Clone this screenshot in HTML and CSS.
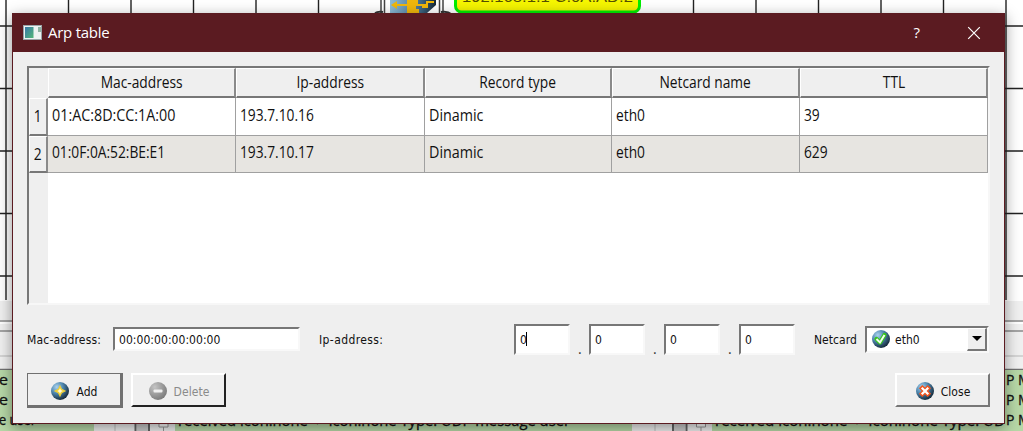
FILE: index.html
```html
<!DOCTYPE html>
<html lang="en">
<head>
<meta charset="utf-8">
<title>Arp table</title>
<link rel="stylesheet" href="styles.css">
</head>
<body>
<svg class="backdrop" width="1023" height="431" viewBox="0 0 1023 431">
  <defs>
    <linearGradient id="lbl" x1="0" y1="0" x2="0" y2="1"><stop offset="0" stop-color="#ffff00"/><stop offset="1" stop-color="#f0f000"/></linearGradient>
    <linearGradient id="router"><stop offset="0" stop-color="#8fbdd9"/><stop offset=".6" stop-color="#4a7798"/><stop offset="1" stop-color="#152735"/></linearGradient>
  </defs>
  <rect width="1023" height="301" fill="#fff"/>
  <path class="grid-line" d="M6 0V300M68.5 0V300M131 0V300M193.5 0V300M256 0V300M318.5 0V300M693.5 0V300M756 0V300M818.5 0V300M881 0V300M943.5 0V300M1006 0V300M0 26H1023M0 88.5H1023M0 151H1023M0 213.500H1023M0 276H1023"/>
  <path d="M381 0V13M384.500 0V13M439.500 0V13M443 0V13" stroke="#444" stroke-width="1.500"/>
  <path d="M375 13q3-2 8-1M441 12q7-1 10 2" stroke="#333" fill="none" stroke-width="2"/>
  <path d="M390 0H436V5L427 13H390Z" fill="url(#router)"/>
  <path d="M391 5l6-4v3h10V0h11v4h8v-3h8v2h-6v5h-6V6h-6v3h3v4h-12V6H397v3Z" fill="#efb70c"/>
  <rect x="455.500" y="-12" width="184" height="24" rx="6" fill="url(#lbl)" stroke="#00ee00" stroke-width="3"/>
  <text x="462" y="1.500" class="label-text" textLength="171" lengthAdjust="spacingAndGlyphs">192.168.1.1 C:0A:AD:2</text>
  <rect y="301" width="1023" height="130" fill="#f0f0f0"/>
  <path d="M0 321H1023M0 331H1023" stroke="#8a8a8a" stroke-width="1.500"/>
  <path d="M0 323H1023" stroke="#fff" stroke-width="2"/>
  <path d="M0 356H1023" stroke="#b8b8b8"/>
  <path d="M0 369.500H1023" stroke="#707070" stroke-width="1.500"/>
  <path d="M0 370H94V431H0ZM175 370H632V431H175ZM712 370H1023V431H712Z" fill="#b7d8a7"/>
  <path d="M135.500 370V431M149 370V431M673 370V431M686.500 370V431" stroke="#666" stroke-width="2"/>
  <path d="M115 370V431M655 370V431" stroke="#d8d8d8" stroke-width="2"/>
  <path d="M137 370H148V431H137ZM674 370H685V431H674Z" fill="#ccc"/>
  <path d="M159 416.500H168V427H159ZM163.500 427V431M696.500 416.500H705.500V427H696.500ZM701 427V431" fill="#fff" stroke="#999"/>
  <g class="log-text">
    <text x="-1" y="385" textLength="46" lengthAdjust="spacingAndGlyphs">e user</text><text x="-1" y="405" textLength="46" lengthAdjust="spacingAndGlyphs">e user</text><text x="-1" y="425" textLength="37" lengthAdjust="spacingAndGlyphs">e user</text>
    <text x="178" y="426" textLength="392" lengthAdjust="spacingAndGlyphs">received icon:none -&gt; icon:none Type: UDP message user</text>
    <text x="715" y="426" textLength="290" lengthAdjust="spacingAndGlyphs">received icon:none -&gt; icon:none Type: UD</text>
    <text x="1006" y="385">P M</text><text x="1006" y="405">P M</text><text x="1006" y="425">P M</text>
  </g>
</svg>

<main class="dialog">
  <header class="titlebar">
    <svg class="app-icon" width="19" height="15" viewBox="0 0 19 15">
      <defs><linearGradient id="app" x1="0" y1="0" x2="1" y2="1"><stop offset="0" stop-color="#3878a8"/><stop offset="1" stop-color="#52b878"/></linearGradient></defs>
      <rect width="19" height="15" fill="#9aa5a8"/><rect x="1" y="1" width="17" height="13" fill="#edf3f2"/><rect x="2" y="2" width="8.500" height="11" fill="url(#app)"/><rect x="15" y="2" width="3" height="5" fill="#8fb4a4"/>
    </svg>
    <h1 class="title">Arp table</h1>
    <span class="help">?</span>
    <svg class="close-x" width="14" height="14" viewBox="0 0 14 14"><path d="M1.200 1.200L12.800 12.800M12.800 1.200L1.200 12.800"/></svg>
  </header>

  <section class="table">
    <div class="row head">
      <div class="corner"></div><div class="th"><span class="ui">Mac-address</span></div><div class="th"><span class="ui">Ip-address</span></div><div class="th"><span class="ui">Record type</span></div><div class="th"><span class="ui">Netcard name</span></div><div class="th"><span class="ui">TTL</span></div>
    </div>
    <div class="row">
      <div class="num"><span class="ui">1</span></div><div class="td"><span class="ui wide">01:AC:8D:CC:1A:00</span></div><div class="td"><span class="ui">193.7.10.16</span></div><div class="td"><span class="ui wide">Dinamic</span></div><div class="td"><span class="ui">eth0</span></div><div class="td"><span class="ui">39</span></div>
    </div>
    <div class="row alt">
      <div class="num"><span class="ui">2</span></div><div class="td"><span class="ui">01:0F:0A:52:BE:E1</span></div><div class="td"><span class="ui">193.7.10.17</span></div><div class="td"><span class="ui wide">Dinamic</span></div><div class="td"><span class="ui">eth0</span></div><div class="td"><span class="ui">629</span></div>
    </div>
    <div class="gutter"></div>
  </section>

  <section class="form">
    <label class="small mac-label">Mac-address:</label>
    <div class="field mac"><span class="small">00:00:00:00:00:00</span></div>
    <label class="small ip-label">Ip-address:</label>
    <div class="ip">
      <div class="field octet"><span class="small">0</span><i class="caret"></i></div><span class="dot">.</span>
      <div class="field octet"><span class="small">0</span></div><span class="dot">.</span>
      <div class="field octet"><span class="small">0</span></div><span class="dot">.</span>
      <div class="field octet"><span class="small">0</span></div>
    </div>
    <label class="small net-label">Netcard</label>
    <div class="field combo">
      <svg width="20" height="20" viewBox="0 0 20 20">
        <defs>
          <radialGradient id="ball" cx=".32" cy=".28" r=".8"><stop offset="0" stop-color="#a9d2ee"/><stop offset=".45" stop-color="#4d85ad"/><stop offset="1" stop-color="#10202e"/></radialGradient>
          <radialGradient id="gray" cx=".32" cy=".28" r=".8"><stop offset="0" stop-color="#c4c4c4"/><stop offset="1" stop-color="#777"/></radialGradient>
        </defs>
        <circle cx="10" cy="10" r="9" fill="url(#ball)"/><path d="M5.500 10L9 13.500L13.500 6" fill="none" stroke="#38c51c" stroke-width="4.200" stroke-linecap="round" stroke-linejoin="round"/><path d="M5.500 10L9 13.500L13.500 6" fill="none" stroke="#f2fff0" stroke-width="2"/>
      </svg>
      <span class="small">eth0</span>
      <span class="arrow"><svg width="10" height="5" viewBox="0 0 10 5"><path d="M0 0H10L5 5Z"/></svg></span>
    </div>
  </section>

  <footer class="buttons">
    <button class="btn add"><svg width="20" height="20" viewBox="0 0 20 20"><circle cx="10" cy="10" r="9" fill="url(#ball)"/><path d="M10 5.500L11.500 8.500L14.500 10L11.500 11.500L10 14.500L8.500 11.500L5.500 10L8.500 8.500Z" fill="#fffce0" stroke="#efcf35" stroke-width="1.500"/></svg><span class="small">Add</span></button>
    <button class="btn delete" disabled><svg width="20" height="20" viewBox="0 0 20 20"><circle cx="10" cy="10" r="9" fill="url(#gray)"/><rect x="5.500" y="8.500" width="9" height="3" rx="1" fill="#f0f0f0"/></svg><span class="small">Delete</span></button>
    <button class="btn close"><svg width="20" height="20" viewBox="0 0 20 20"><circle cx="10" cy="10" r="9" fill="url(#ball)"/><path d="M7.300 7.300L12.700 12.700M12.700 7.300L7.300 12.700" stroke="#f0541e" stroke-width="4.800" stroke-linecap="square"/><path d="M7.500 7.500L12.500 12.500M12.500 7.500L7.500 12.500" stroke="#fff" stroke-width="2.200" stroke-linecap="square"/></svg><span class="small">Close</span></button>
  </footer>
</main>
</body>
</html>
```
FILE: styles.css
```css
* { box-sizing: border-box; }
body { margin: 0; width: 1023px; height: 431px; overflow: hidden; background: #f0f0f0; font-family: "Open Sans", "Noto Sans", sans-serif; color: #111; }
.backdrop { position: absolute; left: 0; top: 0; z-index: -1; }
.grid-line { stroke: #222; stroke-width: 1.4; fill: none; }
.label-text { font: 15px "Liberation Sans", sans-serif; fill: #554f00; }
.log-text { font: 14px "Open Sans", sans-serif; fill: #111; stroke: #111; stroke-width: .3px; }

.dialog { display: flex; flex-direction: column; width: 993px; height: 411px; margin: 13px 0 0 12px; background: #efefef; border: 1px solid #5b1b21; box-shadow: 0 4px 14px rgba(0, 0, 0, .42); }
.titlebar { display: flex; align-items: center; height: 38px; flex: none; padding: 0 23px 0 10px; background: #5b1b21; color: #fff; }
.app-icon { margin-bottom: 2px; }
.title { margin: 0 auto 0 6px; padding-bottom: 2px; font-size: 15px; font-weight: 400; line-height: 36px; letter-spacing: -.25px; }
.help { margin-right: 47px; padding-bottom: 2px; font-size: 15px; }
.close-x path { stroke: #fff; stroke-width: 1.2; }

.table { display: flex; flex-direction: column; width: 963px; height: 239px; flex: none; margin: 14px 0 0 14px; background: #fff; border: solid; border-width: 2px; border-color: #777 #f7f7f7 #f7f7f7 #777; }
.row { display: grid; grid-template-columns: 19px 188px 189px 187px 188px 188px; height: 37px; flex: none; }
.row.head { height: 30px; }
.row:nth-child(2) { height: 38px; }
.corner { background: #efefef; }
.th, .num { display: flex; align-items: center; justify-content: center; padding-bottom: 1px; background: #efefef; border: solid; border-width: 1px 2px 2px 1px; border-color: #fff #8a8a8a #777 #fff; }
.td { display: flex; align-items: center; padding: 0 0 4px 4px; border-right: 1px solid #a0a0a0; border-bottom: 1px solid #a0a0a0; }
.alt .td { background: #e7e5e1; }
.ui { display: inline-block; font-size: 16px; line-height: 20px; white-space: nowrap; transform: scaleX(.86); }
.td .ui { transform-origin: left; }
.td .wide { transform: scaleX(.895); }
.gutter { flex: 1; width: 19px; background: #efefef; }

.form { display: flex; align-items: center; height: 34px; flex: none; margin: 17px 14px 0 14px; }
.small { font-family: "DejaVu Sans Condensed", "DejaVu Sans", sans-serif; font-stretch: condensed; font-size: 12px; line-height: 16px; letter-spacing: .05px; white-space: nowrap; padding-top: 2px; }
.field { display: flex; align-items: center; background: #fff; border: solid; border-width: 2px; border-color: #777 #f8f8f8 #f8f8f8 #777; }
.mac-label { width: 86px; letter-spacing: .2px; }
.mac { width: 187px; height: 24px; padding-left: 4px; }
.ip-label { margin-left: 19px; width: 195px; letter-spacing: .4px; }
.ip { display: flex; align-items: flex-end; }
.octet { width: 56px; height: 31px; padding-left: 4px; }
.dot { width: 19px; padding-left: 8px; font-size: 14px; line-height: 12px; color: #333; }
.caret { width: 1px; height: 14px; margin-left: -1px; background: #000; }
.net-label { margin-left: 19px; width: 51px; }
.combo { width: 124px; height: 27px; padding-left: 4px; gap: 4px; }
.arrow { display: flex; align-items: center; justify-content: center; width: 20px; height: 23px; margin-left: auto; background: #efefef; border: solid; border-width: 1px 2px 2px 1px; border-color: #fff #777 #777 #fff; }

.buttons { display: flex; margin: 17px 14px 0 14px; }
.btn { display: flex; align-items: center; justify-content: center; gap: 6px; height: 34px; width: 95px; padding: 2px 0 0; background: #efefef; color: #111; border: solid; border-width: 2px; border-color: #fff #777 #777 #fff; }
.btn svg { margin-bottom: 1px; }
.add { width: 96px; height: 35px; padding-top: 3px; border: solid #707070; border-width: 1px 3px 3px 1px; }
.delete { margin-left: 8px; color: #8a8a8a; border-color: #fff #222 #222 #fff; }
.close { margin-left: auto; }
```
